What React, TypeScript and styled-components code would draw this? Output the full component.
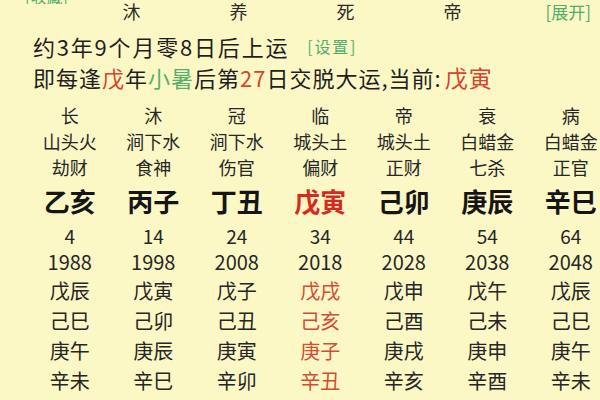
import React from "react";
import styled, { createGlobalStyle } from "styled-components";

const Global = createGlobalStyle`
  html, body { margin: 0; padding: 0; background: #fcf8c6; overflow: hidden; }
  body { font-family: "Noto Sans CJK SC", "Noto Sans", sans-serif; color: #222; }
`;

const Page = styled.div`
  width: 600px;
  height: 400px;
  overflow: hidden;
  background: #fcf8c6;
`;

const CutLine = styled.div`
  height: 4px;
  overflow: hidden;
  display: flex;
  align-items: flex-end;
  padding-left: 25px;
`;

const Link = styled.span<{ $size?: number }>`
  color: #4fae6c;
  font-size: ${(p) => p.$size ?? 16}px;
  line-height: ${(p) => p.$size ?? 16}px;
`;

const TopRow = styled.div`
  margin-top: -4px;
  height: 22px;
  display: flex;
  align-items: center;
  padding-left: 78px;
  padding-right: 9px;
`;

const TopCell = styled.div`
  width: 107px;
  text-align: center;
  font-size: 18px;
  line-height: 22px;
  color: #2a2a2a;
`;

const Spacer = styled.div`
  flex: 1;
`;

const InfoLine = styled.div<{ $mt: number; $ls: number }>`
  margin-top: ${(p) => p.$mt}px;
  height: 30px;
  display: flex;
  align-items: center;
  padding-left: 33px;
  font-size: 22px;
  letter-spacing: ${(p) => p.$ls}px;
  white-space: nowrap;
  color: #1f1f1f;
`;

const Red = styled.span<{ $size?: number }>`
  color: #d8432f;
  ${(p) => (p.$size ? `font-size: ${p.$size}px;` : "")}
`;

const Green = styled.span`
  color: #56b06d;
`;

const Gap = styled.span<{ $w: number }>`
  display: inline-block;
  width: ${(p) => p.$w}px;
`;

const Table = styled.div`
  margin-top: 10px;
  padding-left: 28px;
`;

const Row = styled.div<{ $h: number; $size: number; $bold?: boolean }>`
  display: grid;
  grid-template-columns: repeat(7, 83.5px);
  height: ${(p) => p.$h}px;
  align-items: center;
  font-size: ${(p) => p.$size}px;
  font-weight: ${(p) => (p.$bold ? 700 : 400)};
  line-height: 1;
`;

const Cell = styled.div<{ $tone?: "red" | "soft"; $bold?: boolean }>`
  text-align: center;
  white-space: nowrap;
  color: ${(p) =>
    p.$tone === "red"
      ? "#d9291c"
      : p.$tone === "soft"
      ? "#d24d38"
      : p.$bold
      ? "#151515"
      : "#262626"};
`;

type RowDef = { h: number; size: number; bold?: boolean; cells: string[]; tone?: "red" | "soft" };

const rows: RowDef[] = [
  { h: 26, size: 18, cells: ["长", "沐", "冠", "临", "帝", "衰", "病"] },
  { h: 26, size: 18, cells: ["山头火", "涧下水", "涧下水", "城头土", "城头土", "白蜡金", "白蜡金"] },
  { h: 26, size: 18, cells: ["劫财", "食神", "伤官", "偏财", "正财", "七杀", "正官"] },
  { h: 42, size: 26, bold: true, tone: "red", cells: ["乙亥", "丙子", "丁丑", "戊寅", "己卯", "庚辰", "辛巳"] },
  { h: 26, size: 19, cells: ["4", "14", "24", "34", "44", "54", "64"] },
  { h: 28, size: 20, cells: ["1988", "1998", "2008", "2018", "2028", "2038", "2048"] },
  { h: 30, size: 20, tone: "soft", cells: ["戊辰", "戊寅", "戊子", "戊戌", "戊申", "戊午", "戊辰"] },
  { h: 30, size: 20, tone: "soft", cells: ["己巳", "己卯", "己丑", "己亥", "己酉", "己未", "己巳"] },
  { h: 30, size: 20, tone: "soft", cells: ["庚午", "庚辰", "庚寅", "庚子", "庚戌", "庚申", "庚午"] },
  { h: 30, size: 20, tone: "soft", cells: ["辛未", "辛巳", "辛卯", "辛丑", "辛亥", "辛酉", "辛未"] },
];

export default function App() {
  return (
    <Page>
      <Global />
      <CutLine>
        <Link>[收藏]</Link>
      </CutLine>
      <TopRow>
        {["沐", "养", "死", "帝"].map((t) => (
          <TopCell key={t}>{t}</TopCell>
        ))}
        <Spacer />
        <Link $size={17}>[展开]</Link>
      </TopRow>
      <InfoLine $mt={9} $ls={1.8}>
        约3年9个月零8日后上运
        <Gap $w={18} />
        <Link $size={16}>[设置]</Link>
      </InfoLine>
      <InfoLine $mt={1} $ls={1}>
        即每逢<Red>戊</Red>年<Green>小暑</Green>后第<Red>27</Red>日交脱大运,当前:
        <Gap $w={3} />
        <Red $size={23}>戊寅</Red>
      </InfoLine>
      <Table>
        {rows.map((r, i) => (
          <Row key={i} $h={r.h} $size={r.size} $bold={r.bold}>
            {r.cells.map((c, j) => (
              <Cell key={j} $bold={r.bold} $tone={j === 3 ? r.tone : undefined}>
                {c}
              </Cell>
            ))}
          </Row>
        ))}
      </Table>
    </Page>
  );
}
